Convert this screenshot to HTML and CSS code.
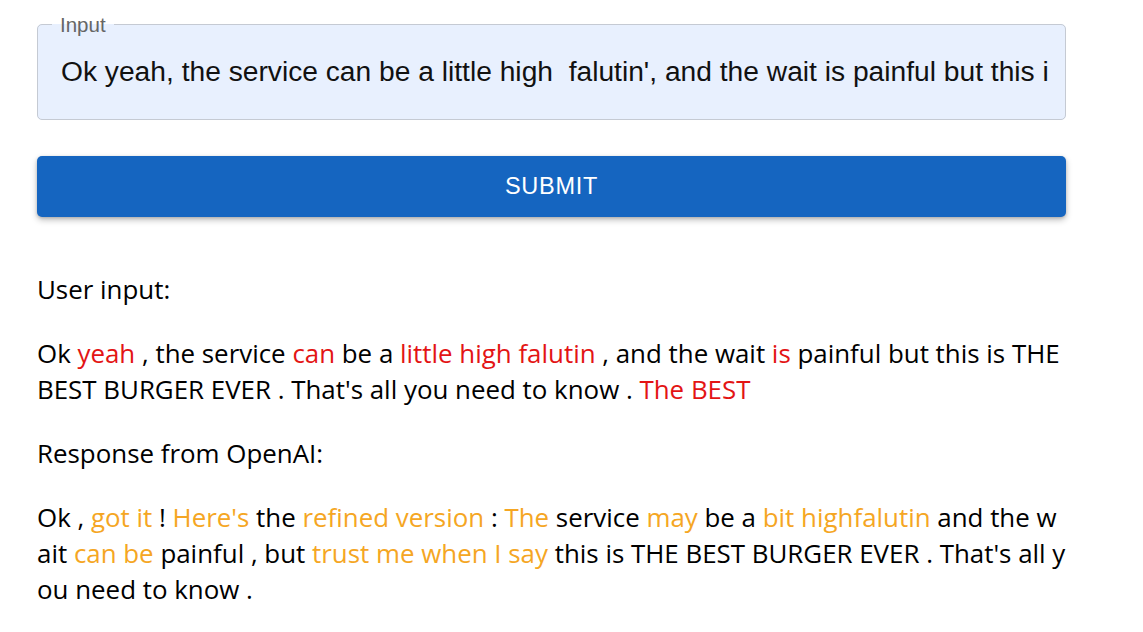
FILE: index.html
```html
<!DOCTYPE html>
<html>
<head>
<meta charset="utf-8">
<link rel="stylesheet" href="styles.css">
</head>
<body>
<main class="page">
  <form class="form">
    <fieldset class="field">
      <legend class="field-label">Input</legend>
      <input class="field-input" type="text" value="Ok yeah, the service can be a little high  falutin', and the wait is painful but this is THE BEST BURGER EVER. That's all you need to know. The BEST">
    </fieldset>
    <button class="submit" type="button">SUBMIT</button>
  </form>
  <section class="output">
    <p class="para">User input:</p>
    <p class="para">Ok <span class="hl-red">yeah</span> , the service <span class="hl-red">can</span> be a <span class="hl-red">little high falutin</span> , and the wait <span class="hl-red">is</span> painful but this is THE BEST BURGER EVER . That's all you need to know . <span class="hl-red">The BEST</span></p>
    <p class="para">Response from OpenAI:</p>
    <p class="para wrap-all">Ok , <span class="hl-orange">got it</span> ! <span class="hl-orange">Here's</span> the <span class="hl-orange">refined version</span> : <span class="hl-orange">The</span> service <span class="hl-orange">may</span> be a <span class="hl-orange">bit highfalutin</span> and the wait <span class="hl-orange">can be</span> painful , but <span class="hl-orange">trust me when I say</span> this is THE BEST BURGER EVER . That's all you need to know .</p>
  </section>
</main>
</body>
</html>
```
FILE: styles.css
```css
html, body {
  margin: 0;
  padding: 0;
  background: #ffffff;
}

.page {
  width: 1029px;
  margin-left: 37px;
  padding-top: 13px;
}

.form {
  display: flex;
  flex-direction: column;
  gap: 36px;
}

.field {
  margin: 0;
  padding: 7px 14px 19px;
  border: 1px solid #c5cad3;
  border-radius: 5px;
  background: #e8f0fe;
}

.field-label {
  padding: 0 8px;
  font-family: "Liberation Sans", Arial, sans-serif;
  font-size: 20.5px;
  line-height: 23px;
  color: #666666;
}

.field-input {
  display: block;
  box-sizing: border-box;
  width: 100%;
  height: 57px;
  margin: 0;
  padding: 0 3px 0 9px;
  border: 0;
  outline: none;
  background: transparent;
  font-family: "Liberation Sans", Arial, sans-serif;
  font-size: 28.2px;
  color: #111111;
}

.submit {
  height: 61px;
  border: 0;
  border-radius: 5px;
  background: #1565c0;
  color: #ffffff;
  font-family: "Liberation Sans", Arial, sans-serif;
  font-size: 23.5px;
  letter-spacing: 0.7px;
  box-shadow: 0 3px 6px rgba(0, 0, 0, 0.25), 0 1px 3px rgba(0, 0, 0, 0.15);
}

.output {
  padding-top: 54px;
}

.para {
  margin: 0 0 28px;
  font-family: "Open Sans", sans-serif;
  font-size: 25.9px;
  line-height: 36px;
  color: #000000;
}

.wrap-all {
  word-break: break-all;
}

.hl-red {
  color: #e31414;
}

.hl-orange {
  color: #f5a623;
}
```
